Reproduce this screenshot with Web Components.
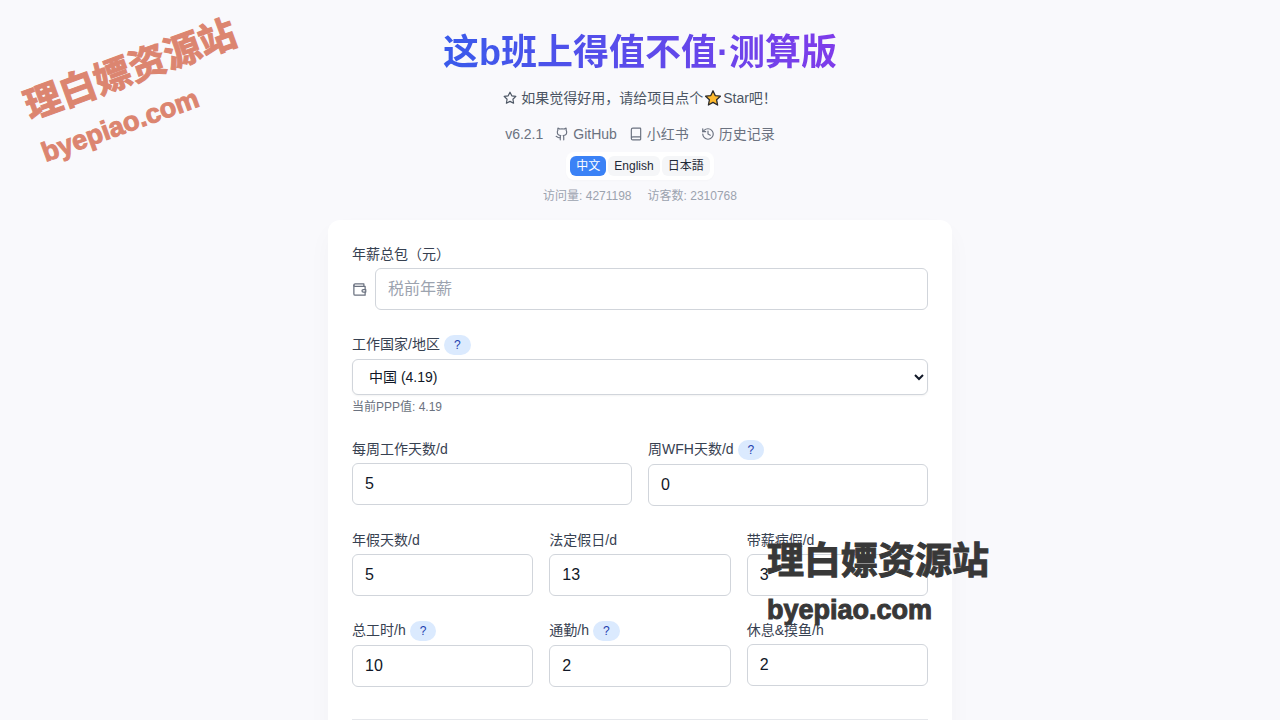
<!DOCTYPE html>
<html lang="zh-CN">
<head>
<meta charset="utf-8">
<meta name="viewport" content="width=device-width, initial-scale=1">
<title>这b班上得值不值·测算版</title>
<style>
  html { scrollbar-width: none; }
  body {
    margin: 0;
    min-height: 100vh;
    background: #f9f9fc;
    color: #111827;
    font-family: "Liberation Sans", "Noto Sans CJK SC", sans-serif;
    font-size: 14px;
    line-height: 20px;
  }
</style>
</head>
<body>
<salary-app></salary-app>
<script>
const ICONS = {
  star: '<path d="M12 2l3.09 6.26L22 9.27l-5 4.87 1.18 6.88L12 17.77l-6.18 3.25L7 14.14 2 9.27l6.91-1.01L12 2z"/>',
  github: '<path d="M15 22v-4a4.8 4.8 0 0 0-1-3.5c3 0 6-2 6-5.5.08-1.25-.27-2.48-1-3.5.28-1.15.28-2.35 0-3.5 0 0-1 0-3 1.5-2.64-.5-5.36-.5-8 0C6 2 5 2 5 2c-.3 1.15-.3 2.35 0 3.5A5.4 5.4 0 0 0 4 9c0 3.5 3 5.5 6 5.5-.39.49-.68 1.05-.85 1.65S8.93 17.38 9 18v4"/><path d="M9 18c-4.51 2-5-2-7-2"/>',
  book: '<path d="M4 19.5v-15A2.5 2.5 0 0 1 6.500 2H19a1 1 0 0 1 1 1v18a1 1 0 0 1-1 1H6.500a1 1 0 0 1 0-5H20"/>',
  history: '<path d="M3 12a9 9 0 1 0 9-9 9.750 9.750 0 0 0-6.740 2.740L3 8"/><path d="M3 3v5h5"/><path d="M12 7v5l4 2"/>',
  wallet: '<path d="M21 12V7H5a2 2 0 0 1 0-4h14v4"/><path d="M3 5v14a2 2 0 0 0 2 2h16v-5"/><path d="M18 12a2 2 0 0 0 0 4h4v-4Z"/>'
};

function define(name, render) {
  customElements.define(name, class extends HTMLElement {
    constructor() { super(); this.attachShadow({ mode: 'open' }); }
    connectedCallback() { this.shadowRoot.innerHTML = render(this); }
  });
}

define('line-icon', el => `
  <style>
    :host { display: block; flex: none; width: var(--icon-size, 14px); height: var(--icon-size, 14px); }
    svg { display: block; width: 100%; height: 100%; }
  </style>
  <svg viewBox="0 0 24 24" fill="none" stroke="currentColor" stroke-width="2" stroke-linecap="round" stroke-linejoin="round" aria-hidden="true">${ICONS[el.getAttribute('name')]}</svg>`);

define('gold-star', () => `
  <style>
    :host { display: block; flex: none; width: 20px; height: 18px; }
    svg { display: block; margin: 0 auto; }
  </style>
  <svg width="18" height="18" viewBox="0 0 18 18" role="img" aria-label="star"><path d="M9 1.800 11.200 6.600 16.400 7.200 12.600 10.800 13.600 16 9 13.400 4.400 16 5.400 10.800 1.600 7.200 6.800 6.600Z" fill="#fdb92e" stroke="#2b2b2b" stroke-width="1.300" stroke-linejoin="round"/></svg>`);

define('nav-link', el => `
  <style>
    :host { display: block; }
    a { display: flex; align-items: center; gap: 4px; color: #6b7280; text-decoration: none; }
  </style>
  <a href="${el.getAttribute('href') || '#'}"><line-icon name="${el.getAttribute('icon')}"></line-icon><slot></slot></a>`);

define('lang-switch', () => `
  <style>
    :host { display: flex; gap: 2px; padding: 4px; border-radius: 8px; background: #fff; box-shadow: 0 1px 2px rgba(0,0,0,.02); }
    button { margin: 0; border: 0; padding: 2px 6px; border-radius: 6px; background: #f5f6f8; color: #1f2937; font: inherit; font-size: 12px; line-height: 16px; cursor: pointer; }
    button[aria-pressed="true"] { background: #3b82f6; color: #fff; }
  </style>
  <button type="button" aria-pressed="true">中文</button>
  <button type="button" aria-pressed="false">English</button>
  <button type="button" aria-pressed="false" lang="ja">日本語</button>`);

define('page-header', () => `
  <style>
    :host { display: flex; flex-direction: column; align-items: center; }
    h1 { align-self: stretch; margin: 0 0 14px; text-align: center; font-size: 36px; line-height: 42px; font-weight: 700; color: transparent; background: linear-gradient(to right, #2563eb, #9333ea); -webkit-background-clip: text; background-clip: text; }
    p { display: flex; align-items: center; margin: 0 0 16px; color: #4b5563; }
    p line-icon { margin-right: 4px; }
    nav { display: flex; gap: 12px; margin-bottom: 8px; color: #6b7280; }
    .stats { display: flex; gap: 16px; margin-top: 8px; font-size: 12px; line-height: 16px; color: #9ca3af; }
  </style>
  <h1>这b班上得值不值·测算版</h1>
  <p><line-icon name="star"></line-icon><span>如果觉得好用，请给项目点个</span><gold-star></gold-star><span>Star吧！</span></p>
  <nav>
    <span>v6.2.1</span>
    <nav-link icon="github">GitHub</nav-link>
    <nav-link icon="book">小红书</nav-link>
    <nav-link icon="history">历史记录</nav-link>
  </nav>
  <lang-switch></lang-switch>
  <div class="stats"><span>访问量: 4271198</span><span>访客数: 2310768</span></div>`);

define('form-card', () => `
  <style>
    :host { display: flex; flex-direction: column; gap: 24px; padding: 24px; border-radius: 12px; background: #fff; box-shadow: 0 12px 24px rgba(0,20,0,.03); }
  </style>
  <slot></slot>`);

define('field-row', el => `
  <style>
    :host { display: grid; grid-template-columns: repeat(${el.getAttribute('columns')}, minmax(0, 1fr)); gap: 16px; align-items: start; }
  </style>
  <slot></slot>`);

define('help-badge', () => `
  <style>
    :host { display: block; padding-top: 1px; }
    button { display: block; margin: 0; border: 0; padding: 2px 10px; border-radius: 10px; background: #dbeafe; color: #1e40af; font: inherit; font-size: 12px; line-height: 16px; cursor: help; }
  </style>
  <button type="button" aria-label="帮助">?</button>`);

const fieldStyles = `
  :host { display: block; }
  .head { display: flex; gap: 4px; margin-bottom: 4px; }
  label { color: #374151; }
  .line { display: flex; align-items: center; gap: 8px; color: #6b7280; --icon-size: 15px; }
  input, select { box-sizing: border-box; width: 100%; min-width: 0; margin: 0; border: 1px solid #d1d5db; border-radius: 6px; background-color: #fff; color: #111827; font-family: inherit; }
  input { display: block; flex: 1; padding: 8px 12px; font-size: 16px; line-height: 24px; height: 42px; appearance: textfield; }
  input::placeholder { color: #9ca3af; opacity: 1; }
  select { display: block; height: 36px; padding: 0 0 0 12px; font-size: 14px; box-shadow: 0 1px 2px rgba(0,0,0,.05); }
  small { display: block; margin-top: 4px; font-size: 12px; line-height: 16px; color: #6b7280; }`;

const head = el => `<div class="head"><label for="control">${el.getAttribute('label').replace('&', '&amp;')}</label>${el.hasAttribute('help') ? '<help-badge></help-badge>' : ''}</div>`;

define('input-field', el => `
  <style>${fieldStyles}</style>
  ${head(el)}
  <div class="line">
    ${el.hasAttribute('icon') ? `<line-icon name="${el.getAttribute('icon')}"></line-icon>` : ''}
    <input id="control" type="number" value="${el.getAttribute('value') || ''}" placeholder="${el.getAttribute('placeholder') || ''}">
  </div>`);

define('country-field', el => `
  <style>${fieldStyles}</style>
  ${head(el)}
  <select id="control"><option>中国 (4.19)</option></select>
  <small>当前PPP值: 4.19</small>`);

define('site-mark', () => `
  <style>
    :host { display: block; position: absolute; pointer-events: none; white-space: nowrap; font-weight: 700; line-height: 48px; -webkit-text-stroke: 1px currentColor; stroke-linejoin: round; }
    :host([tone="coral"]) { left: 18px; top: 86px; color: #dc8570; transform: rotate(-20deg); transform-origin: 0 0; }
    :host([tone="dark"]) { left: calc(50% + 127px); top: 538px; color: #383838; }
    span { display: block; }
    .name { font-size: 37px; }
    .url { font-size: 27px; }
  </style>
  <span class="name">理白嫖资源站</span><span class="url">byepiao.com</span>`);

define('salary-app', () => `
  <style>
    :host { display: block; position: relative; overflow: hidden; }
    main { max-width: 624px; margin: 0 auto; padding: 32px 16px; }
    page-header { margin-bottom: 16px; }
    hr { box-sizing: border-box; width: 100%; height: 1px; margin: 8px 0 0; border: 0; background: #e5e7eb; }
  </style>
  <main>
    <page-header></page-header>
    <form-card>
      <input-field label="年薪总包（元）" icon="wallet" placeholder="税前年薪"></input-field>
      <country-field label="工作国家/地区" help></country-field>
      <field-row columns="2">
        <input-field label="每周工作天数/d" value="5"></input-field>
        <input-field label="周WFH天数/d" value="0" help></input-field>
      </field-row>
      <field-row columns="3">
        <input-field label="年假天数/d" value="5"></input-field>
        <input-field label="法定假日/d" value="13"></input-field>
        <input-field label="带薪病假/d" value="3"></input-field>
      </field-row>
      <field-row columns="3">
        <input-field label="总工时/h" value="10" help></input-field>
        <input-field label="通勤/h" value="2" help></input-field>
        <input-field label="休息&amp;摸鱼/h" value="2"></input-field>
      </field-row>
      <hr>
    </form-card>
  </main>
  <site-mark tone="coral"></site-mark>
  <site-mark tone="dark"></site-mark>`);
</script>
</body>
</html>
